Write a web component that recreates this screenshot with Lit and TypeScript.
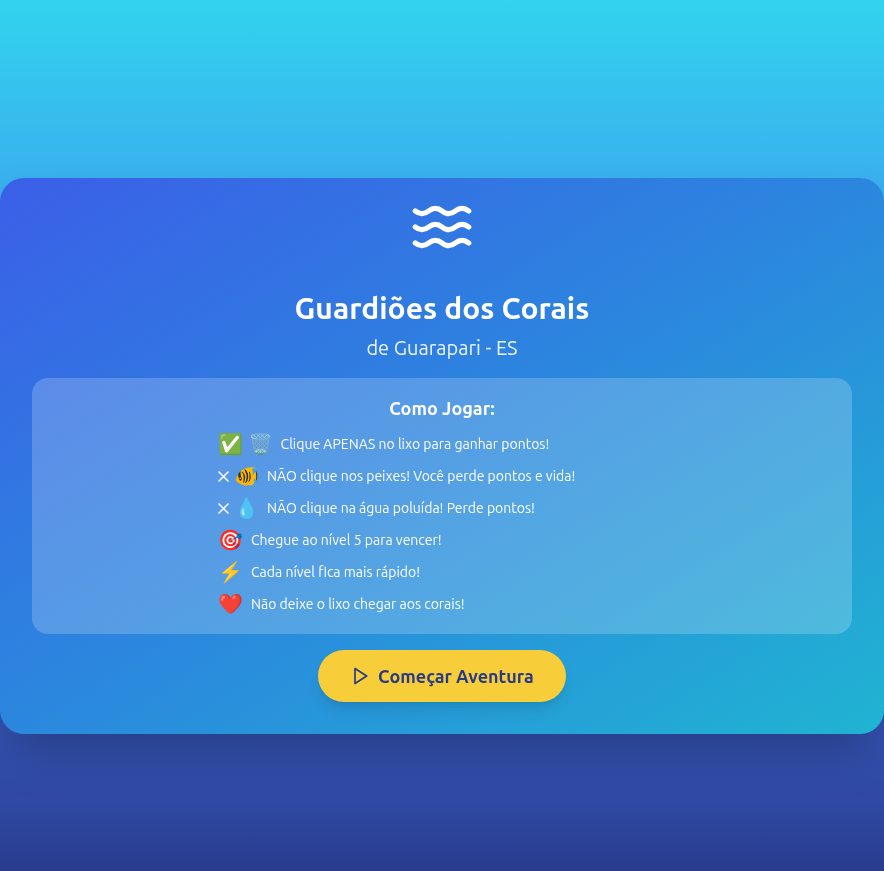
import { LitElement, html, css, svg, nothing } from "lit";
import { customElement } from "lit/decorators.js";

interface Rule {
  cross?: boolean;
  icons: string;
  text: string;
}

const RULES: Rule[] = [
  { icons: "✅ 🗑️", text: "Clique APENAS no lixo para ganhar pontos!" },
  { cross: true, icons: "🐠", text: "NÃO clique nos peixes! Você perde pontos e vida!" },
  { cross: true, icons: "💧", text: "NÃO clique na água poluída! Perde pontos!" },
  { icons: "🎯", text: "Chegue ao nível 5 para vencer!" },
  { icons: "⚡", text: "Cada nível fica mais rápido!" },
  { icons: "❤️", text: "Não deixe o lixo chegar aos corais!" },
];

const WAVE_ROWS = [6, 12, 18];

@customElement("app-root")
export class AppRoot extends LitElement {
  static styles = css`
    :host {
      display: flex;
      flex-direction: column;
      justify-content: center;
      box-sizing: border-box;
      min-height: 100vh;
      padding-top: 40px;
      overflow: hidden;
      background: linear-gradient(
        to bottom,
        #32d3ee,
        #4380ef 50%,
        #3351ae 84%,
        #2f49a4 92%,
        #293c8e
      );
      font-family: Ubuntu, "Noto Sans", sans-serif;
      font-weight: 400;
      color: #fff;
    }
    .card {
      display: flex;
      flex-direction: column;
      align-items: center;
      padding: 17px 32px 32px;
      border-radius: 24px;
      background: linear-gradient(to bottom right, #3b5fe8, #2b87de 50%, #20b4d2);
      box-shadow: 0 25px 50px -12px rgba(0, 0, 0, 0.25);
      will-change: transform;
    }
    .waves {
      width: 64px;
      height: 64px;
      margin-bottom: 31px;
    }
    .icon {
      fill: none;
      stroke: currentColor;
      stroke-width: 2;
      stroke-linecap: round;
      stroke-linejoin: round;
    }
    h1,
    h2,
    p,
    ul {
      margin: 0;
    }
    h1 {
      font-size: 30px;
      line-height: 36px;
      font-weight: 600;
    }
    .place {
      margin: 8px 0 16px;
      font-size: 20px;
      line-height: 28px;
      opacity: 0.9;
    }
    .panel {
      align-self: stretch;
      padding: 16px;
      border-radius: 16px;
      background: rgba(255, 255, 255, 0.2);
    }
    h2 {
      margin-bottom: 8px;
      text-align: center;
      font-size: 18px;
      line-height: 28px;
      font-weight: 600;
    }
    .rules {
      display: flex;
      flex-direction: column;
      gap: 4px;
      max-width: 448px;
      margin: 0 auto;
      padding: 0;
      list-style: none;
    }
    .rule {
      display: flex;
      align-items: center;
      gap: 8px;
      height: 28px;
      font-size: 14px;
      line-height: 18px;
    }
    .marks {
      display: flex;
      align-items: center;
      gap: 4px;
      font-size: 20px;
      line-height: 28px;
    }
    .cross {
      width: 12px;
      height: 12px;
      stroke-width: 3;
      stroke-linecap: butt;
    }
    .start {
      display: flex;
      align-items: center;
      gap: 8px;
      margin-top: 16px;
      padding: 12px 32px;
      border: 0;
      border-radius: 26px;
      background: #f7ce39;
      color: #283b87;
      font: inherit;
      font-size: 18px;
      line-height: 28px;
      font-weight: 600;
      cursor: pointer;
      box-shadow: 0 10px 15px -3px rgba(0, 0, 0, 0.1), 0 4px 6px -4px rgba(0, 0, 0, 0.1);
    }
    .play {
      width: 20px;
      height: 20px;
    }
  `;

  private renderRule(rule: Rule) {
    return html`<li class="rule">
      <span class="marks">
        ${rule.cross
          ? html`<svg class="icon cross" viewBox="0 0 24 24" aria-hidden="true">
              <path d="M1 3l20 20M21 3L1 23" />
            </svg>`
          : nothing}
        <span>${rule.icons}</span>
      </span>
      <span>${rule.text}</span>
    </li>`;
  }

  render() {
    return html`<main class="card">
      <svg class="icon waves" viewBox="0 0 24 24" aria-hidden="true">
        ${WAVE_ROWS.map(
          (y) => svg`<path d="M2 ${y}c.6.5 1.2 1 2.5 1C7 ${y + 1} 7 ${y - 1} 9.5 ${y - 1}c2.6 0 2.4 2 5 2 2.5 0 2.5-2 5-2 1.3 0 1.9.5 2.5 1" />`,
        )}
      </svg>
      <h1>Guardiões dos Corais</h1>
      <p class="place">de Guarapari - ES</p>
      <section class="panel">
        <h2>Como Jogar:</h2>
        <ul class="rules">
          ${RULES.map((rule) => this.renderRule(rule))}
        </ul>
      </section>
      <button class="start" type="button">
        <svg class="icon play" viewBox="0 0 24 24" aria-hidden="true">
          <path d="M6 3l14 9-14 9z" />
        </svg>
        <span>Começar Aventura</span>
      </button>
    </main>`;
  }
}
